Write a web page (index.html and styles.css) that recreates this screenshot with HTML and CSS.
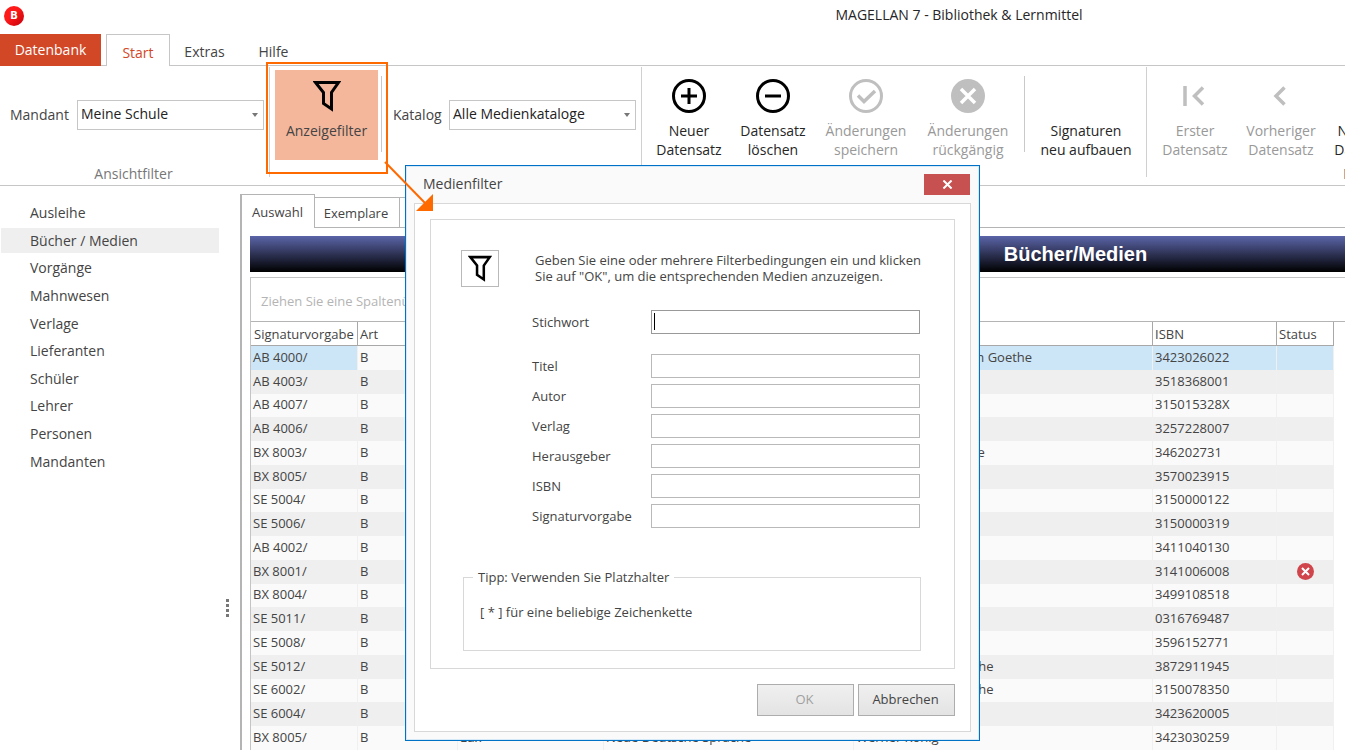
FILE: index.html
```html
<!DOCTYPE html>
<html lang="de">
<head>
<meta charset="utf-8">
<title>MAGELLAN 7 - Bibliothek &amp; Lernmittel</title>
<link rel="stylesheet" href="styles.css">
</head>
<body>
<svg class="defs" aria-hidden="true">
  <symbol id="funnel" viewBox="0 0 28 32"><path fill="none" stroke="#000" stroke-width="3" d="M2.500 2.500H25.500L18.500 12.500V29L10.500 23.500V12.500Z"/></symbol>
</svg>

<header class="titlebar">
  <span class="app-icon">B</span>
  <h1 class="title">MAGELLAN 7 - Bibliothek &amp; Lernmittel</h1>
</header>

<nav class="tabs">
  <button class="tab tab-file">Datenbank</button>
  <button class="tab tab-active">Start</button>
  <button class="tab">Extras</button>
  <button class="tab">Hilfe</button>
</nav>

<section class="ribbon">
  <div class="group group-view">
    <div class="group-row">
      <label for="mandant">Mandant</label>
      <span class="combo"><select id="mandant"><option>Meine Schule</option></select></span>
    </div>
    <div class="group-name">Ansichtfilter</div>
  </div>
  <div class="group group-filter">
    <div class="group-row">
      <button class="filter-btn"><svg class="funnel-lg" aria-hidden="true"><use href="#funnel"/></svg>Anzeigefilter</button>
      <span class="sep"></span>
      <label for="katalog">Katalog</label>
      <span class="combo"><select id="katalog"><option>Alle Medienkataloge</option></select></span>
    </div>
  </div>
  <div class="group group-edit">
    <div class="group-row">
      <button class="tool w84"><svg viewBox="0 0 34 34" aria-hidden="true"><g fill="none" stroke="#000" stroke-width="3"><circle cx="17" cy="17" r="15.500"/><path d="M17 9v16M9 17h16"/></g></svg>Neuer<br>Datensatz</button>
      <button class="tool w84"><svg viewBox="0 0 34 34" aria-hidden="true"><g fill="none" stroke="#000" stroke-width="3"><circle cx="17" cy="17" r="15.500"/><path d="M9 17h16"/></g></svg>Datensatz<br>löschen</button>
      <button class="tool w102" disabled><svg viewBox="0 0 34 34" aria-hidden="true"><g fill="none" stroke="#bfbfbf" stroke-width="3"><circle cx="17" cy="17" r="15.500"/><path stroke-width="3.500" d="M9 16.500l6 6L26 12"/></g></svg>Änderungen<br>speichern</button>
      <button class="tool w102" disabled><svg viewBox="0 0 34 34" aria-hidden="true"><circle cx="17" cy="17" r="17" fill="#bfbfbf"/><path fill="none" stroke="#fff" stroke-width="3.500" d="M10 10l14 14M24 10L10 24"/></svg>Änderungen<br>rückgängig</button>
      <span class="sep"></span>
      <button class="tool w112"><svg viewBox="0 0 34 34" aria-hidden="true"></svg>Signaturen<br>neu aufbauen</button>
    </div>
  </div>
  <div class="group group-nav">
    <div class="group-row">
      <button class="tool w86" disabled><svg viewBox="0 0 34 34" aria-hidden="true"><path fill="none" stroke="#bfbfbf" stroke-width="3.500" d="M7 7v20M25 8.500L16.500 17l8.500 8.500"/></svg>Erster<br>Datensatz</button>
      <button class="tool w86" disabled><svg viewBox="0 0 34 34" aria-hidden="true"><path fill="none" stroke="#bfbfbf" stroke-width="3.500" d="M20.500 8.500L12 17l8.500 8.500"/></svg>Vorheriger<br>Datensatz</button>
      <button class="tool w86"><svg viewBox="0 0 34 34" aria-hidden="true"></svg>Nächster<br>Datensatz</button>
    </div>
    <div class="group-name">Navigation</div>
  </div>
</section>

<div class="workspace">
  <aside class="sidebar">
    <ul class="menu">
      <li><a href="#">Ausleihe</a></li>
      <li><a href="#" class="current">Bücher / Medien</a></li>
      <li><a href="#">Vorgänge</a></li>
      <li><a href="#">Mahnwesen</a></li>
      <li><a href="#">Verlage</a></li>
      <li><a href="#">Lieferanten</a></li>
      <li><a href="#">Schüler</a></li>
      <li><a href="#">Lehrer</a></li>
      <li><a href="#">Personen</a></li>
      <li><a href="#">Mandanten</a></li>
    </ul>
  </aside>
  <div class="splitter"><i></i><i></i><i></i><i></i></div>
  <main class="content">
    <div class="page-tabs">
      <button class="page-tab page-tab-active">Auswahl</button>
      <button class="page-tab">Exemplare</button>
      <button class="page-tab"></button>
      <span class="page-tabs-rest"></span>
    </div>
    <div class="page">
      <h2 class="banner">Bücher/Medien</h2>
      <div class="grid-box">
        <div class="group-hint">Ziehen Sie eine Spaltenüberschrift hierher</div>
        <table class="grid">
          <colgroup><col class="c-sig"><col class="c-art"><col class="c-fach"><col class="c-titel"><col><col class="c-isbn"><col class="c-status"></colgroup>
          <thead><tr><th>Signaturvorgabe</th><th>Art</th><th></th><th></th><th></th><th>ISBN</th><th>Status</th></tr></thead>
          <tbody>
            <tr class="selected"><td>AB 4000/</td><td class="cell-focus">B</td><td></td><td></td><td>Johann Wolfgang von Goethe</td><td>3423026022</td><td></td></tr>
            <tr><td>AB 4003/</td><td>B</td><td></td><td></td><td></td><td>3518368001</td><td></td></tr>
            <tr><td>AB 4007/</td><td>B</td><td></td><td></td><td></td><td>315015328X</td><td></td></tr>
            <tr><td>AB 4006/</td><td>B</td><td></td><td></td><td></td><td>3257228007</td><td></td></tr>
            <tr><td>BX 8003/</td><td>B</td><td></td><td></td><td>Friedrich v. Nietzsche</td><td>346202731</td><td></td></tr>
            <tr><td>BX 8005/</td><td>B</td><td></td><td></td><td></td><td>3570023915</td><td></td></tr>
            <tr><td>SE 5004/</td><td>B</td><td></td><td></td><td></td><td>3150000122</td><td></td></tr>
            <tr><td>SE 5006/</td><td>B</td><td></td><td></td><td></td><td>3150000319</td><td></td></tr>
            <tr><td>AB 4002/</td><td>B</td><td></td><td></td><td></td><td>3411040130</td><td></td></tr>
            <tr><td>BX 8001/</td><td>B</td><td></td><td></td><td></td><td>3141006008</td><td class="status"><svg viewBox="0 0 17 17" role="img" aria-label="gesperrt"><circle cx="8.500" cy="8.500" r="8.500" fill="#d0454c"/><path stroke="#fff" stroke-width="2" d="M5 5l7 7M12 5l-7 7"/></svg></td></tr>
            <tr><td>BX 8004/</td><td>B</td><td></td><td></td><td></td><td>3499108518</td><td></td></tr>
            <tr><td>SE 5011/</td><td>B</td><td></td><td></td><td></td><td>0316769487</td><td></td></tr>
            <tr><td>SE 5008/</td><td>B</td><td></td><td></td><td></td><td>3596152771</td><td></td></tr>
            <tr><td>SE 5012/</td><td>B</td><td></td><td></td><td>Joh. Wolfg. von Goethe</td><td>3872911945</td><td></td></tr>
            <tr><td>SE 6002/</td><td>B</td><td></td><td></td><td>Joh. Wolfg. von Goethe</td><td>3150078350</td><td></td></tr>
            <tr><td>SE 6004/</td><td>B</td><td></td><td></td><td></td><td>3423620005</td><td></td></tr>
            <tr><td>BX 8005/</td><td>B</td><td>Lux</td><td>Neue Deutsche Sprache</td><td>Werner König</td><td>3423030259</td><td></td></tr>
          </tbody>
        </table>
      </div>
    </div>
  </main>
</div>

<div class="dialog" role="dialog" aria-labelledby="dlg-title">
  <div class="dialog-head">
    <h2 id="dlg-title">Medienfilter</h2>
    <button class="close" aria-label="Schließen"><svg viewBox="0 0 12 10" aria-hidden="true"><path stroke="#fff" stroke-width="2.200" d="M1.500.500l9 9M10.500.500l-9 9"/></svg></button>
  </div>
  <form class="dialog-body">
    <div class="panel">
      <div class="intro">
        <span class="intro-icon"><svg class="funnel-sm" aria-hidden="true"><use href="#funnel"/></svg></span>
        <p>Geben Sie eine oder mehrere Filterbedingungen ein und klicken<br>Sie auf "OK", um die entsprechenden Medien anzuzeigen.</p>
      </div>
      <div class="field field-first"><label for="f1">Stichwort</label><input id="f1" type="text" class="focused"></div>
      <div class="field"><label for="f2">Titel</label><input id="f2" type="text"></div>
      <div class="field"><label for="f3">Autor</label><input id="f3" type="text"></div>
      <div class="field"><label for="f4">Verlag</label><input id="f4" type="text"></div>
      <div class="field"><label for="f5">Herausgeber</label><input id="f5" type="text"></div>
      <div class="field"><label for="f6">ISBN</label><input id="f6" type="text"></div>
      <div class="field"><label for="f7">Signaturvorgabe</label><input id="f7" type="text"></div>
      <fieldset class="tip">
        <legend>Tipp: Verwenden Sie Platzhalter</legend>
        [ * ] für eine beliebige Zeichenkette
      </fieldset>
    </div>
    <div class="actions">
      <button type="submit" disabled>OK</button>
      <button type="button">Abbrechen</button>
    </div>
  </form>
</div>

<svg class="callout" viewBox="0 0 440 220" aria-hidden="true">
  <rect x="267" y="63" width="120" height="110" fill="none" stroke="#ff6a00" stroke-width="2"/>
  <path d="M385 162L426 204" stroke="#ff6a00" stroke-width="2"/>
  <path d="M433 194V211H416Z" fill="#ff6a00"/>
</svg>
</body>
</html>
```
FILE: styles.css
```css
* { box-sizing: border-box; }

body {
  margin: 0;
  height: 100vh;
  display: flex;
  flex-direction: column;
  overflow: hidden;
  position: relative;
  background: #fff;
  color: #444;
  font: 14px/19px "Open Sans", "Noto Sans", sans-serif;
}

button, input, select { font: inherit; color: inherit; }
h1, h2, p, ul { margin: 0; padding: 0; font: inherit; }
.defs { display: none; }

/* Title bar */
.titlebar { height: 34px; flex: none; display: flex; align-items: flex-start; padding: 5px 0 0 4px; }
.app-icon {
  width: 20px; height: 20px; flex: none; margin-top: 1px; border-radius: 50%;
  background: linear-gradient(135deg, #ff1a1a 40%, #c4000a); color: #fff; text-align: center;
  font: bold 10px/20px "DejaVu Sans", sans-serif;
}
.title { flex: 1; padding-left: 549px; text-align: center; color: #262626; white-space: nowrap; }

/* Ribbon tabs */
.tabs { height: 32px; flex: none; display: flex; border-bottom: 1px solid #c6c6c6; }
.tab { height: 31px; padding: 4px 0 0; width: 69px; border: 0; background: none; }
.tab-file { width: 101px; height: 32px; padding: 0 0 1px; margin-right: 5px; background: #d24726; color: #fff; }
.tab-active { width: 64px; height: 32px; padding-top: 3px; border: 1px solid #c6c6c6; border-bottom: 0; background: #fff; color: #d24726; }

/* Ribbon */
.ribbon { height: 120px; flex: none; display: flex; border-bottom: 1px solid #c6c6c6; overflow: hidden; }
.group { flex: none; display: flex; flex-direction: column; position: relative; }
.group::after { content: ""; position: absolute; right: 0; top: 1px; height: 110px; width: 1px; background: #d0d0d0; }
.group-row { display: flex; align-items: center; height: 98px; }
.group-row label { padding-bottom: 2px; }
.group-name { text-align: center; color: #777; }
.group-view { width: 270px; }
.group-view .group-row { padding: 0 6px 0 10px; }
.group-view .group-name { padding-right: 3px; }
.group-view .combo { margin-left: auto; }
.group-filter { width: 372px; }
.group-filter .group-row { padding: 0 6px 0 5px; }
.group-filter .combo { margin-left: auto; }
.group-filter .sep { margin: 10px 11px 0 3px; }
.group-edit .group-row, .group-nav .group-row { padding: 0 5px; }
.group-nav { width: 462px; }
.sep { width: 1px; height: 76px; margin: 10px 5px 0; background: #c9c9c9; align-self: flex-start; }

.combo { position: relative; width: 187px; height: 30px; }
.combo select {
  display: block; width: 100%; height: 30px; padding: 0 20px 3px 3px;
  border: 1px solid #c6c6c6; border-radius: 0; background: #fff; color: #222; appearance: none;
}
.combo::after { content: ""; position: absolute; right: 6px; top: 13px; border: 3px solid transparent; border-top: 4px solid #777; border-bottom: 0; }

.filter-btn {
  width: 103px; height: 90px; padding: 10px 0 0; border: 0; background: #f4b79c; align-self: flex-start; margin-top: 4px;
  display: flex; flex-direction: column; align-items: center; gap: 9px;
}
.funnel-lg { width: 28px; height: 32px; }

.tool {
  align-self: flex-start; flex: none; height: 94px; padding: 12px 0 0; border: 0; background: none; color: #262626; white-space: nowrap;
}
.tool:disabled { color: #999; }
.tool svg { display: block; width: 34px; height: 34px; margin: 0 auto 8px; }
.w84 { width: 84px; }
.w86 { width: 86px; }
.w102 { width: 102px; }
.w112 { width: 112px; }

/* Workspace */
.workspace { flex: 1; min-height: 0; display: flex; overflow: hidden; }
.sidebar { width: 219px; flex: none; padding-top: 13px; }
.menu { list-style: none; height: 276px; display: flex; flex-direction: column; }
.menu li { flex: 1; padding: 1px 0 1px 1px; display: flex; }
.menu a { flex: 1; display: flex; align-items: center; padding-left: 29px; color: inherit; text-decoration: none; }
.menu .current { background: #efefef; }
.splitter { width: 21px; flex: none; display: flex; flex-direction: column; gap: 2px; padding: 413px 0 0 7px; }
.splitter i { width: 3px; height: 3px; background: #777; }

.content { flex: 1; min-width: 0; display: flex; flex-direction: column; padding-top: 8px; font-size: 13px; line-height: 18px; }
.page-tabs { display: flex; align-items: flex-end; height: 34px; flex: none; }
.page-tab { width: 85px; height: 31px; padding: 0 2px 0 0; border: 1px solid #b4b4b4; border-left: 0; background: #fff; flex: none; }
.page-tab-active { width: 75px; height: 34px; padding: 1px 1px 0 0; border-left: 2px solid #b4b4b4; border-bottom: 0; }
.page-tabs-rest { flex: 1; border-bottom: 1px solid #b4b4b4; }
.page { flex: 1; border-left: 2px solid #b4b4b4; padding: 8px 0 0 8px; min-height: 0; }

.banner {
  height: 36px; padding-left: 556px; text-align: center; color: #fff;
  font: bold 20px/36px "Liberation Sans", Arial, sans-serif;
  background: linear-gradient(#5b65a9, #000);
}
.grid-box { margin-top: 5px; border: solid #c4c4c4; border-width: 1px 0 0 1px; }
.group-hint { height: 44px; padding: 14px 0 0 10px; color: #b4b4b4; white-space: nowrap; overflow: hidden; border-bottom: 1px solid #b4b4b4; }

.grid { width: calc(100% - 11px); height: 428px; table-layout: fixed; border-collapse: separate; border-spacing: 0; }
.c-sig { width: 107px; }
.c-art { width: 100px; }
.c-fach { width: 146px; }
.c-titel { width: 250px; }
.c-isbn { width: 124px; }
.c-status { width: 57px; }
.grid th, .grid td { padding: 0 0 0 2px; text-align: left; font-weight: normal; white-space: nowrap; overflow: hidden; border-right: 1px solid #f0f0f0; }
.grid td { padding-bottom: 2px; }
.grid th { height: 24px; padding-top: 1px; border-right-color: #a8a8a8; border-bottom: 1px solid #a8a8a8; }
.grid th:first-child { padding-left: 3px; }
.grid tbody tr { background: #fafafa; }
.grid tbody tr:nth-child(even) { background: #efefef; }
.grid tbody tr.selected { background: #cde6f7; }
.grid .cell-focus { background: #fafafa; }
.grid .status { padding: 0; }
.status svg { width: 17px; height: 17px; display: block; margin: 0 auto; }

/* Filter dialog, floats above the workspace */
.dialog {
  position: absolute; left: 405px; top: 165px; width: 575px; padding: 0 8px 8px;
  border: 1px solid #0072c6; background: #fafafa; box-shadow: inset 0 0 0 1px #d5e9f7;
  font-size: 13px; line-height: 16px;
}
.dialog-head { height: 37px; display: flex; justify-content: space-between; padding: 8px 1px 0 9px; font-size: 14px; line-height: 20px; }
.close { width: 46px; height: 21px; padding: 0; border: 0; background: #c75050; display: flex; align-items: center; justify-content: center; }
.close svg { width: 11px; height: 9px; }
.dialog-body { border: 1px solid #d8d8d8; background: #fff; padding: 15px; }
.panel { border: 1px solid #d8d8d8; padding: 30px 34px 18px 32px; height: 450px; }
.intro { display: flex; margin-left: -2px; }
.intro-icon { width: 38px; height: 37px; border: 1px solid #b9b9b9; display: flex; align-items: center; justify-content: center; flex: none; }
.funnel-sm { width: 24px; height: 27px; }
.intro p { margin: 2px 0 0 36px; white-space: nowrap; }
.field { display: flex; align-items: center; justify-content: space-between; padding-left: 69px; margin-bottom: 6px; }
.field input { width: 269px; height: 24px; padding: 0 4px; border: 1px solid #b9b9b9; background: #fff; outline: 0; }
.field-first { margin: 23px 0 20px; }
.field .focused { border-color: #999; background: linear-gradient(#000, #000) 2px 2px / 1px 17px no-repeat #fff; }
.tip { margin: 41px -1px 0 0; height: 82px; padding: 19px 0 0 16px; border: 1px solid #d8d8d8; }
.tip legend { margin-left: -7px; padding: 0 5px; }
.actions { display: flex; justify-content: flex-end; gap: 4px; margin-top: 15px; }
.actions button { width: 97px; height: 32px; padding: 0 2px 2px 0; border: 1px solid #adadad; background: linear-gradient(#f0f0f0, #e3e3e3); }
.actions button:disabled { color: #a0a0a0; }

.callout { position: absolute; left: 0; top: 0; width: 440px; height: 220px; pointer-events: none; }
```
